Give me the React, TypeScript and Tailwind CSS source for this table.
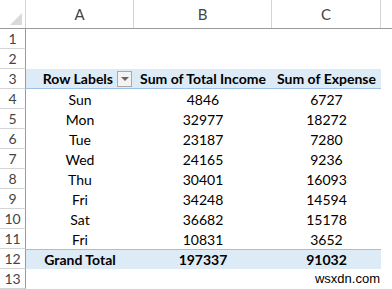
import React from 'react';

const rows: [string, string, string][] = [
  ['Sun', '4846', '6727'],
  ['Mon', '32977', '18272'],
  ['Tue', '23187', '7280'],
  ['Wed', '24165', '9236'],
  ['Thu', '30401', '16093'],
  ['Fri', '34248', '14594'],
  ['Sat', '36682', '15178'],
  ['Fri', '10831', '3652'],
];

const font = { fontFamily: 'Lato, "Liberation Sans", sans-serif' };

function RowNum({ n }: { n: number }) {
  return (
    <div className="w-[26px] shrink-0 h-full border-r border-b border-[#d4d4d4] border-r-[#9b9b9b] bg-white flex items-center justify-center text-[14px] text-[#444]">
      {n}
    </div>
  );
}

export default function App() {
  return (
    <div className="w-[392px] h-[289px] overflow-hidden bg-white text-[14px] text-black" style={font}>
      {/* column headers */}
      <div className="flex h-[29px] border-b border-[#9b9b9b] bg-white">
        <div className="w-[26px] shrink-0 border-r border-[#d4d4d4] relative">
          <div className="absolute right-[3px] bottom-[3px] w-0 h-0 border-l-[12px] border-l-transparent border-b-[12px] border-b-[#dadada]" />
        </div>
        <div className="w-[108px] shrink-0 border-r border-[#d4d4d4] flex items-center justify-center text-[15px] text-[#444]">A</div>
        <div className="w-[138px] shrink-0 border-r border-[#d4d4d4] flex items-center justify-center text-[15px] text-[#444]">B</div>
        <div className="w-[109px] shrink-0 border-r border-[#d4d4d4] flex items-center justify-center text-[15px] text-[#444]">C</div>
        <div className="flex-1" />
      </div>

      {[1, 2].map((n) => (
        <div key={n} className="flex h-[20px]">
          <RowNum n={n} />
        </div>
      ))}

      {/* pivot header */}
      <div className="flex h-[20px]">
        <RowNum n={3} />
        <div className="w-[355px] shrink-0 flex bg-[#ddebf7] border-b border-[#9bc2e6] font-bold">
          <div className="w-[108px] shrink-0 flex items-center justify-end pr-[2px] gap-[4px]">
            <span>Row Labels</span>
            <span className="w-[15px] h-[16px] border border-[#aaa] bg-[#f3f3f3] flex items-center justify-center">
              <span className="w-0 h-0 border-l-[4px] border-r-[4px] border-t-[4px] border-l-transparent border-r-transparent border-t-[#666]" />
            </span>
          </div>
          <div className="w-[138px] shrink-0 flex items-center justify-center">Sum of Total Income</div>
          <div className="w-[109px] shrink-0 flex items-center justify-center">Sum of Expense</div>
        </div>
      </div>

      {rows.map((r, i) => (
        <div key={i} className="flex h-[20px]">
          <RowNum n={i + 4} />
          <div className="w-[108px] shrink-0 flex items-center justify-center">{r[0]}</div>
          <div className="w-[138px] shrink-0 flex items-center justify-center">{r[1]}</div>
          <div className="w-[109px] shrink-0 flex items-center justify-center">{r[2]}</div>
        </div>
      ))}

      {/* grand total */}
      <div className="flex h-[20px]">
        <RowNum n={12} />
        <div className="w-[355px] shrink-0 flex bg-[#ddebf7] border-t border-[#9bc2e6] font-bold">
          <div className="w-[108px] shrink-0 flex items-center justify-center">Grand Total</div>
          <div className="w-[138px] shrink-0 flex items-center justify-center">197337</div>
          <div className="w-[109px] shrink-0 flex items-center justify-center">91032</div>
        </div>
      </div>

      <div className="flex h-[20px]">
        <RowNum n={13} />
        <div className="flex-1 flex items-center justify-end pr-[12px] text-[13px]" style={{ fontFamily: '"Liberation Sans", sans-serif' }}>
          wsxdn.com
        </div>
      </div>
    </div>
  );
}
